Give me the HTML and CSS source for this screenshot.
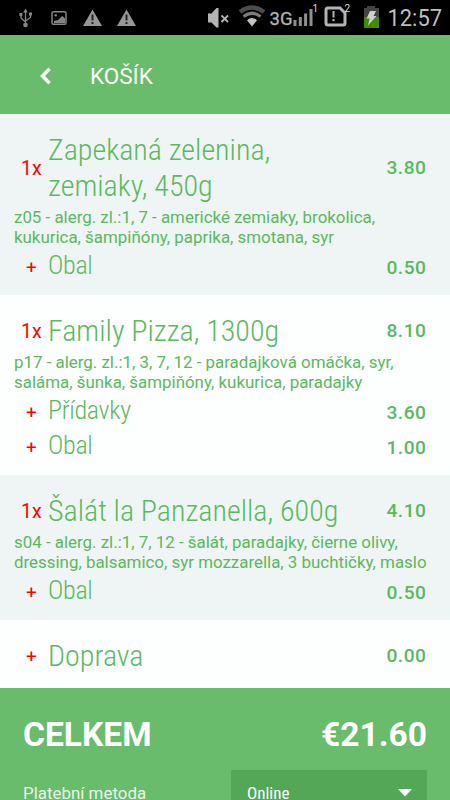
FILE: index.html
```html
<!DOCTYPE html>
<html lang="cs">
<head>
    <meta charset="UTF-8">
    <meta name="viewport" content="width=device-width, initial-scale=1.0">
    <title>Košík</title>
    <link rel="stylesheet" href="styles.css">
</head>
<body>

    <div class="status-bar">
        <svg width="450" height="35" viewBox="0 0 450 35">
            <!-- usb -->
            <g fill="none" stroke="#858585" stroke-width="1.3">
                <path d="M25.500 11v14M21 14v4l4.500 4M30.500 14v3.500l-5 3.500"/>
            </g>
            <path d="M25.500 8.500l2.300 4h-4.600zM19.400 13h3v3h-3zM29 12.500h3v3h-3z" fill="#858585"/>
            <circle cx="25.500" cy="25" r="2.300" fill="#858585"/>
            <!-- picture -->
            <rect x="52" y="11.700" width="14" height="12.600" rx="1.500" fill="none" stroke="#858585" stroke-width="1.500"/>
            <path d="M54 23v-2l4-1 4.500-4 2.500 2.500V23z" fill="#858585"/>
            <circle cx="55.700" cy="15.300" r="1.200" fill="#858585"/>
            <!-- warnings -->
            <path d="M92.500 9.500L102 26H83zM126.500 9.500L136 26h-19z" fill="#969696"/>
            <path d="M92.500 14.500v6M92.500 22v2M126.500 14.500v6M126.500 22v2" stroke="#222" stroke-width="2"/>
            <!-- muted speaker -->
            <path d="M208 13.500h3.500l5-5.500h2v19.500h-2l-5-5H208z" fill="#b4b4b4"/>
            <path d="M221.500 15.500l6.500 6.500M228 15.500l-6.500 6.500" stroke="#b4b4b4" stroke-width="1.800"/>
            <!-- wifi -->
            <path d="M240 12Q252 3 264 12" fill="none" stroke="#4c4c4c" stroke-width="4.500"/>
            <path d="M243.500 16.500Q252 10 260.500 16.500" fill="none" stroke="#7c7c7c" stroke-width="3.200"/>
            <path d="M247 20.300Q252 15.500 257 20.300L252 26.500z" fill="#c4c4c4"/>
            <!-- signal -->
            <text x="269.500" y="25" class="network" textLength="23" lengthAdjust="spacingAndGlyphs">3G</text>
            <path d="M295 20v6M300.300 17v9M305.600 13.500v12.500M311 9v17" stroke="#8f8f8f" stroke-width="3"/>
            <text x="312.500" y="12" class="sim">1</text>
            <!-- second sim -->
            <path d="M328 8h12l5 5v10q0 2-2 2h-15q-2 0-2-2V10q0-2 2-2z" fill="none" stroke="#b4b4b4" stroke-width="3"/>
            <path d="M333.500 11v6.500M333.500 19v2.300" stroke="#b4b4b4" stroke-width="2"/>
            <text x="344.500" y="12" class="sim">2</text>
            <!-- battery -->
            <path d="M367 6h8v2h4v10h-15V8h3z" fill="#444"/>
            <path d="M364 17h15v11h-15z" fill="#438a00"/>
            <path d="M370 11h6l-2.500 5h3L368 25.500l1.700-7h-3.200z" fill="#d0d0d0"/>
            <text x="387.500" y="26" class="clock" textLength="54.500" lengthAdjust="spacingAndGlyphs">12:57</text>
        </svg>
    </div>

    <header class="header">
        <svg class="back" width="12" height="18" viewBox="0 0 12 18">
            <path d="M10.500 1.800L3.500 9l7 7.200" fill="none" stroke="#fff" stroke-width="3.400"/>
        </svg>
        <h1>KOŠÍK</h1>
    </header>

    <main>
        <section class="item shaded">
            <div class="row">
                <span class="count">1x</span>
                <span class="name">Zapekaná zelenina,<br>zemiaky, 450g</span>
                <span class="price">3.80</span>
            </div>
            <p class="description">z05 - alerg. zl.:1, 7 - americké zemiaky, brokolica,<br>kukurica, šampiňóny, paprika, smotana, syr</p>
            <div class="row extra">
                <span class="count">+</span>
                <span class="name">Obal</span>
                <span class="price">0.50</span>
            </div>
        </section>

        <section class="item">
            <div class="row">
                <span class="count">1x</span>
                <span class="name">Family Pizza, 1300g</span>
                <span class="price">8.10</span>
            </div>
            <p class="description">p17 - alerg. zl.:1, 3, 7, 12 - paradajková omáčka, syr,<br>saláma, šunka, šampiňóny, kukurica, paradajky</p>
            <div class="row extra">
                <span class="count">+</span>
                <span class="name">Přídavky</span>
                <span class="price">3.60</span>
            </div>
            <div class="row extra">
                <span class="count">+</span>
                <span class="name">Obal</span>
                <span class="price">1.00</span>
            </div>
        </section>

        <section class="item shaded">
            <div class="row">
                <span class="count">1x</span>
                <span class="name">Šalát la Panzanella, 600g</span>
                <span class="price">4.10</span>
            </div>
            <p class="description">s04 - alerg. zl.:1, 7, 12 - šalát, paradajky, čierne olivy,<br>dressing, balsamico, syr mozzarella, 3 buchtičky, maslo</p>
            <div class="row extra">
                <span class="count">+</span>
                <span class="name">Obal</span>
                <span class="price">0.50</span>
            </div>
        </section>

        <section class="item delivery">
            <div class="row">
                <span class="count plus">+</span>
                <span class="name">Doprava</span>
                <span class="price">0.00</span>
            </div>
        </section>
    </main>

    <footer class="summary">
        <div class="total">
            <span>CELKEM</span>
            <span class="total-price">€21.60</span>
        </div>
        <div class="payment">
            <span class="payment-label">Platební metoda</span>
            <div class="payment-select">
                <span>Online</span>
                <svg width="14" height="8" viewBox="0 0 14 8"><path d="M0 0h14L7 7.500z" fill="#fff"/></svg>
            </div>
        </div>
    </footer>

</body>
</html>
```
FILE: styles.css
```css
* {
    box-sizing: border-box;
}
body {
    margin: 0;
    height: 800px;
    overflow: hidden;
    display: flex;
    flex-direction: column;
    font-family: Roboto, sans-serif;
    background-color: #fff;
    color: #5cb860;
}
.status-bar {
    height: 35px;
    flex: none;
    background-color: #000;
}
.status-bar svg {
    display: block;
}
.network {
    font-size: 19px;
    fill: #b4b4b4;
    stroke: #b4b4b4;
    stroke-width: 0.3px;
}
.sim {
    font-size: 10px;
    fill: #ddd;
}
.clock {
    font-size: 23px;
    fill: #bebebe;
}
.header {
    height: 79px;
    flex: none;
    display: flex;
    align-items: center;
    padding: 2px 0 0 39px;
    background-color: #68bc6c;
    color: #fff;
}
.header h1 {
    margin: 0 0 0 39px;
    font-size: 22.500px;
    font-weight: 400;
    line-height: 28px;
}
.item {
    height: 180px;
    padding: 18px 24px 0 14px;
    background-color: #fdfefe;
}
.item.shaded {
    height: 145px;
    background-color: #eff5f4;
}
.item.shaded:first-child {
    height: 181px;
}
.item.delivery {
    height: 67.500px;
}
.row {
    display: flex;
    align-items: center;
}
.name {
    flex: 1;
    font-family: "Roboto Condensed", Roboto, sans-serif;
    font-stretch: condensed;
    font-size: 30px;
    font-weight: 300;
    line-height: 36px;
    white-space: nowrap;
}
.count {
    width: 34px;
    padding: 2px 0 0 7px;
    color: #f00;
    font-size: 19.500px;
    line-height: 24px;
}
.price {
    font-size: 19.200px;
    font-weight: 500;
    line-height: 24px;
    letter-spacing: 0.5px;
    margin-right: -0.500px;
}
.description {
    margin: 3px 0 1px;
    font-size: 16.900px;
    line-height: 20px;
    white-space: nowrap;
}
.extra {
    height: 34.500px;
    align-items: baseline;
}
.extra .name {
    font-size: 26px;
    line-height: 34px;
    letter-spacing: -0.3px;
}
.extra .count,
.count.plus {
    padding-left: 12px;
    font-size: 19px;
}
.summary {
    flex: none;
    height: 113px;
    padding: 25px 23px 0;
    background-color: #68bc6c;
    color: #fff;
}
.total {
    display: flex;
    justify-content: space-between;
    font-size: 33.600px;
    font-weight: 700;
    line-height: 44px;
}
.payment {
    display: flex;
    justify-content: space-between;
    margin-top: 13.500px;
}
.payment-label {
    font-size: 16.900px;
    line-height: 46px;
    color: #e6f5e7;
}
.payment-select {
    width: 196px;
    height: 46px;
    display: flex;
    align-items: center;
    justify-content: space-between;
    padding: 0 15px 0 16px;
    background-color: #53a757;
    font-family: "Roboto Condensed", Roboto, sans-serif;
    font-stretch: condensed;
    font-size: 17px;
}
```
